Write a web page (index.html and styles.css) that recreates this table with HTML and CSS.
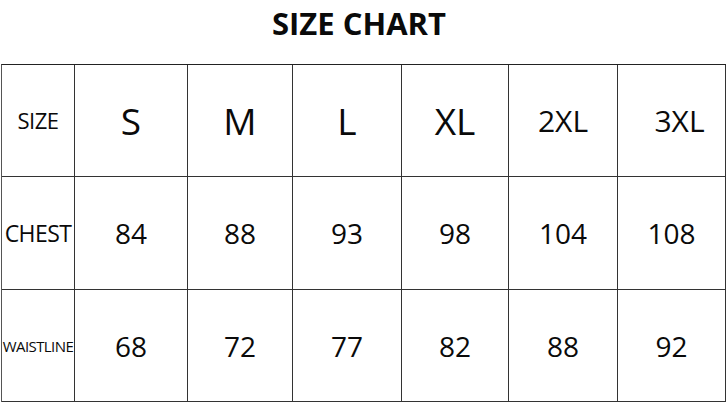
FILE: index.html
```html
<!DOCTYPE html>
<html>
<head>
<meta charset="utf-8">
<link rel="stylesheet" href="styles.css">
</head>
<body>
<div class="page">
  <h1 class="title">SIZE CHART</h1>
  <div class="chart">
    <div class="cell label label-size">SIZE</div>
    <div class="cell head">S</div>
    <div class="cell head">M</div>
    <div class="cell head">L</div>
    <div class="cell head">XL</div>
    <div class="cell head small">2XL</div>
    <div class="cell head small shift">3XL</div>

    <div class="cell label label-chest">CHEST</div>
    <div class="cell num">84</div>
    <div class="cell num">88</div>
    <div class="cell num">93</div>
    <div class="cell num">98</div>
    <div class="cell num">104</div>
    <div class="cell num">108</div>

    <div class="cell label label-waist">WAISTLINE</div>
    <div class="cell num">68</div>
    <div class="cell num">72</div>
    <div class="cell num">77</div>
    <div class="cell num">82</div>
    <div class="cell num">88</div>
    <div class="cell num">92</div>
  </div>
</div>
</body>
</html>
```
FILE: styles.css
```css
html, body {
  margin: 0;
  padding: 0;
  background: #fff;
}
body {
  font-family: "Open Sans", "Noto Sans", sans-serif;
  color: #0a0a0a;
}
.page {
  width: 728px;
  height: 405px;
  padding-top: 3px;
  box-sizing: border-box;
}
.title {
  margin: 0 0 21px 0;
  padding-right: 10px;
  height: 40px;
  line-height: 40px;
  font-size: 31px;
  font-weight: 700;
  text-align: center;
  color: #0a0a0a;
}
.chart {
  margin-left: 1px;
  display: grid;
  grid-template-columns: 73px 113px 105px 109px 107px 109px 108px;
  grid-template-rows: 112px 113px 112px;
  border-top: 1px solid #222;
  border-left: 1px solid #555;
  width: 724px;
}
.cell {
  border-right: 1px solid #333;
  border-bottom: 1px solid #333;
  display: flex;
  align-items: center;
  justify-content: center;
  white-space: nowrap;
  overflow: visible;
}
.label-size {
  font-size: 22px;
  letter-spacing: -0.5px;
  padding-bottom: 2px;
}
.label-chest {
  font-size: 23px;
  letter-spacing: -0.6px;
}
.label-waist {
  font-size: 15px;
  letter-spacing: -0.6px;
}
.head {
  font-size: 37px;
}
.head.small {
  font-size: 30px;
}
.head.shift {
  padding-left: 16px;
}
.num {
  font-size: 28px;
}
```
